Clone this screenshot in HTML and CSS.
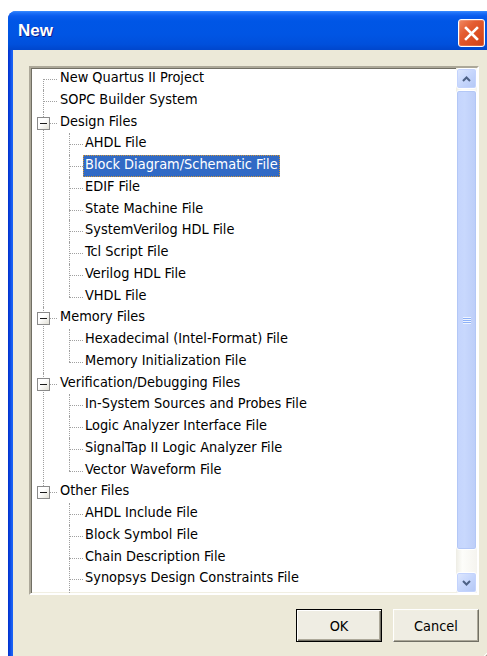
FILE: index.html
```html
<!DOCTYPE html>
<html>
<head>
<meta charset="utf-8">
<title>New</title>
<link rel="stylesheet" href="styles.css">
</head>
<body>
<div class="window">
  <div class="titlebar">
    <span class="title">New</span>
    <button class="close" aria-label="Close">
      <svg width="15" height="15" viewBox="0 0 15 15"><path d="M2 2 L13 13 M13 2 L2 13" stroke="#fff" stroke-width="2.6" stroke-linecap="square"/></svg>
    </button>
  </div>
  <div class="client">
    <div class="tree-box">
      <div class="tree-view">
        <ul class="tree">
          <li><span class="label">New Quartus II Project</span></li>
          <li><span class="label">SOPC Builder System</span></li>
          <li><span class="toggle"></span><span class="label">Design Files</span>
            <ul>
              <li><span class="label">AHDL File</span></li>
              <li><span class="label selected">Block Diagram/Schematic File</span></li>
              <li><span class="label">EDIF File</span></li>
              <li><span class="label">State Machine File</span></li>
              <li><span class="label">SystemVerilog HDL File</span></li>
              <li><span class="label">Tcl Script File</span></li>
              <li><span class="label">Verilog HDL File</span></li>
              <li><span class="label">VHDL File</span></li>
            </ul>
          </li>
          <li><span class="toggle"></span><span class="label">Memory Files</span>
            <ul>
              <li><span class="label">Hexadecimal (Intel-Format) File</span></li>
              <li><span class="label">Memory Initialization File</span></li>
            </ul>
          </li>
          <li><span class="toggle"></span><span class="label">Verification/Debugging Files</span>
            <ul>
              <li><span class="label">In-System Sources and Probes File</span></li>
              <li><span class="label">Logic Analyzer Interface File</span></li>
              <li><span class="label">SignalTap II Logic Analyzer File</span></li>
              <li><span class="label">Vector Waveform File</span></li>
            </ul>
          </li>
          <li><span class="toggle"></span><span class="label">Other Files</span>
            <ul>
              <li><span class="label">AHDL Include File</span></li>
              <li><span class="label">Block Symbol File</span></li>
              <li><span class="label">Chain Description File</span></li>
              <li><span class="label">Synopsys Design Constraints File</span></li>
              <li><span class="label">Text File</span></li>
            </ul>
          </li>
        </ul>
      </div>
      <div class="scrollbar">
        <div class="sb-btn">
          <svg width="9" height="6" viewBox="0 0 9 6"><path d="M1 5 L4.5 1.5 L8 5" fill="none" stroke="#4d6185" stroke-width="2"/></svg>
        </div>
        <div class="sb-thumb"><span class="grip"></span></div>
        <div class="sb-track"></div>
        <div class="sb-btn">
          <svg width="9" height="6" viewBox="0 0 9 6"><path d="M1 1 L4.5 4.5 L8 1" fill="none" stroke="#4d6185" stroke-width="2"/></svg>
        </div>
      </div>
    </div>
    <div class="actions">
      <button class="btn default">OK</button>
      <button class="btn">Cancel</button>
    </div>
    <span class="size-grip">
      <svg width="12" height="12" viewBox="0 0 12 12">
        <path d="M11 3 L3 11 M11 7 L7 11" stroke="#fff" stroke-width="1"/>
        <path d="M12 4 L4 12 M12 8 L8 12" stroke="#aca899" stroke-width="1"/>
      </svg>
    </span>
  </div>
</div>
</body>
</html>
```

FILE: styles.css
```css
html, body {
  margin: 0;
  padding: 0;
  background: #ffffff;
  overflow: hidden;
}

body {
  width: 487px;
  height: 656px;
}

.window {
  margin: 11px 0 0 8px;
  width: 485px;
  border-radius: 8px 8px 0 0;
  background: linear-gradient(to right, #0030cc 0, #0a45e0 2px, #1a62f4 4px, #1a62f4 100%);
  overflow: hidden;
}

/* caption bar */
.titlebar {
  position: relative;
  height: 39px;
  display: flex;
  align-items: center;
  padding-left: 10px;
  background: linear-gradient(to bottom,
    #3a8cff 0, #1c6ff8 2px, #0a5ced 5px, #0056e6 10px,
    #0055e4 60%, #0050dc 85%, #0046cc 100%);
}

.title {
  font-family: "Liberation Sans", Arial, sans-serif;
  font-weight: bold;
  font-size: 17px;
  color: #ffffff;
  text-shadow: 1px 1px 0 #0a1e8c;
  margin-top: 1px;
}

.close {
  position: absolute;
  top: 8px;
  right: 8px;
  width: 27px;
  height: 28px;
  padding: 0;
  border: 1px solid #ffffff;
  border-radius: 3px;
  background: linear-gradient(135deg, #f08a64 0, #e45c31 35%, #d94a1e 75%, #c9401a 100%);
  box-shadow: inset 0 0 0 1px rgba(255, 255, 255, 0.18);
  display: flex;
  align-items: center;
  justify-content: center;
}

/* dialog body */
.client {
  position: relative;
  margin-left: 5px;
  height: 608px;
  background: #ece9d8;
  padding: 16px 14px 0 16px;
  box-sizing: border-box;
  font-family: "DejaVu Sans", Tahoma, sans-serif;
  font-stretch: condensed;
  font-size: 14.4px;
}

.tree-box {
  display: flex;
  height: 529px;
  box-sizing: border-box;
  border-style: solid;
  border-width: 2px;
  border-color: #aca899 #ffffff #ffffff #aca899;
  box-shadow: inset 1px 1px 0 #716f64, inset -1px -1px 0 #f1efe2;
  background: #ffffff;
}

.tree-view {
  flex: 1;
  overflow: hidden;
}

/* tree with dotted connector lines */
.tree, .tree ul {
  list-style: none;
  margin: 0;
  padding: 0;
}

.tree ul {
  margin-left: -3px;
}

.tree li {
  position: relative;
  padding-left: 28px;
}

.tree > li {
  padding-left: 29px;
}

.tree li::before {
  content: "";
  position: absolute;
  left: 12px;
  top: 11px;
  width: 14px;
  border-top: 1px dotted #a0a0a0;
}

.tree li::after {
  content: "";
  position: absolute;
  left: 12px;
  top: 0;
  bottom: 0;
  border-left: 1px dotted #a0a0a0;
}

.tree li:last-child::after {
  bottom: auto;
  height: 11px;
}

.tree > li:first-child::after {
  top: 11px;
}

.toggle {
  position: absolute;
  z-index: 1;
  left: 6px;
  top: 5px;
  width: 11px;
  height: 11px;
  border: 1px solid #8a8a8a;
  background: linear-gradient(135deg, #ffffff 40%, #e2e0d6 100%);
}

.toggle::before {
  content: "";
  position: absolute;
  left: 2px;
  top: 5px;
  width: 7px;
  height: 1px;
  background: #1a1a1a;
}

.label {
  display: block;
  width: max-content;
  height: 21.75px;
  box-sizing: border-box;
  line-height: 17.5px;
  padding: 1px 2px 3.25px;
  margin-left: -2px;
  color: #000000;
  white-space: nowrap;
}

.label.selected {
  background: #316ac5;
  color: #ffffff;
  outline: 1px dotted #ce953a;
  outline-offset: -1px;
}

/* vertical scroll bar */
.scrollbar {
  width: 21px;
  display: flex;
  flex-direction: column;
  background: linear-gradient(to right, #eeede5 0, #fdfdfa 30%, #f5f4ef 100%);
}

.sb-btn {
  flex: none;
  height: 21px;
  box-sizing: border-box;
  border: 1px solid #ffffff;
  border-radius: 3px;
  background: linear-gradient(135deg, #dfe8fe 0, #c6d6fc 50%, #b3c7f5 100%);
  box-shadow: inset 0 0 0 1px #c3d3fd;
  display: flex;
  align-items: center;
  justify-content: center;
}

.sb-thumb {
  flex: none;
  height: 460px;
  margin-top: 1px;
  box-sizing: border-box;
  border: 1px solid #ffffff;
  border-radius: 3px;
  background: linear-gradient(to right, #c4d4fd 0, #c8d8fd 40%, #bccdf8 100%);
  box-shadow: inset 0 0 0 1px #b3c7f6;
  display: flex;
  align-items: center;
  justify-content: center;
}

.grip {
  width: 8px;
  height: 7px;
  background: repeating-linear-gradient(to bottom, #eef4fe 0, #eef4fe 1px, #8cb0f8 1px, #8cb0f8 2px);
}

.sb-track {
  flex: 1;
}

/* dialog buttons */
.actions {
  display: flex;
  justify-content: flex-end;
  gap: 11px;
  margin-top: 14px;
}

.btn {
  width: 86px;
  height: 33px;
  padding: 0;
  font: inherit;
  color: #000000;
  background: #efede3;
  border-style: solid;
  border-width: 1px;
  border-color: #ffffff #716f64 #716f64 #ffffff;
  box-shadow: inset -1px -1px 0 #aca899, inset 1px 1px 0 #f1efe2;
}

.btn.default {
  border: 1px solid #000000;
  box-shadow: inset 1px 1px 0 #ffffff, inset -1px -1px 0 #716f64, inset -2px -2px 0 #aca899;
}

.size-grip {
  position: absolute;
  right: 0;
  bottom: 1px;
  width: 12px;
  height: 12px;
  line-height: 0;
}
```
